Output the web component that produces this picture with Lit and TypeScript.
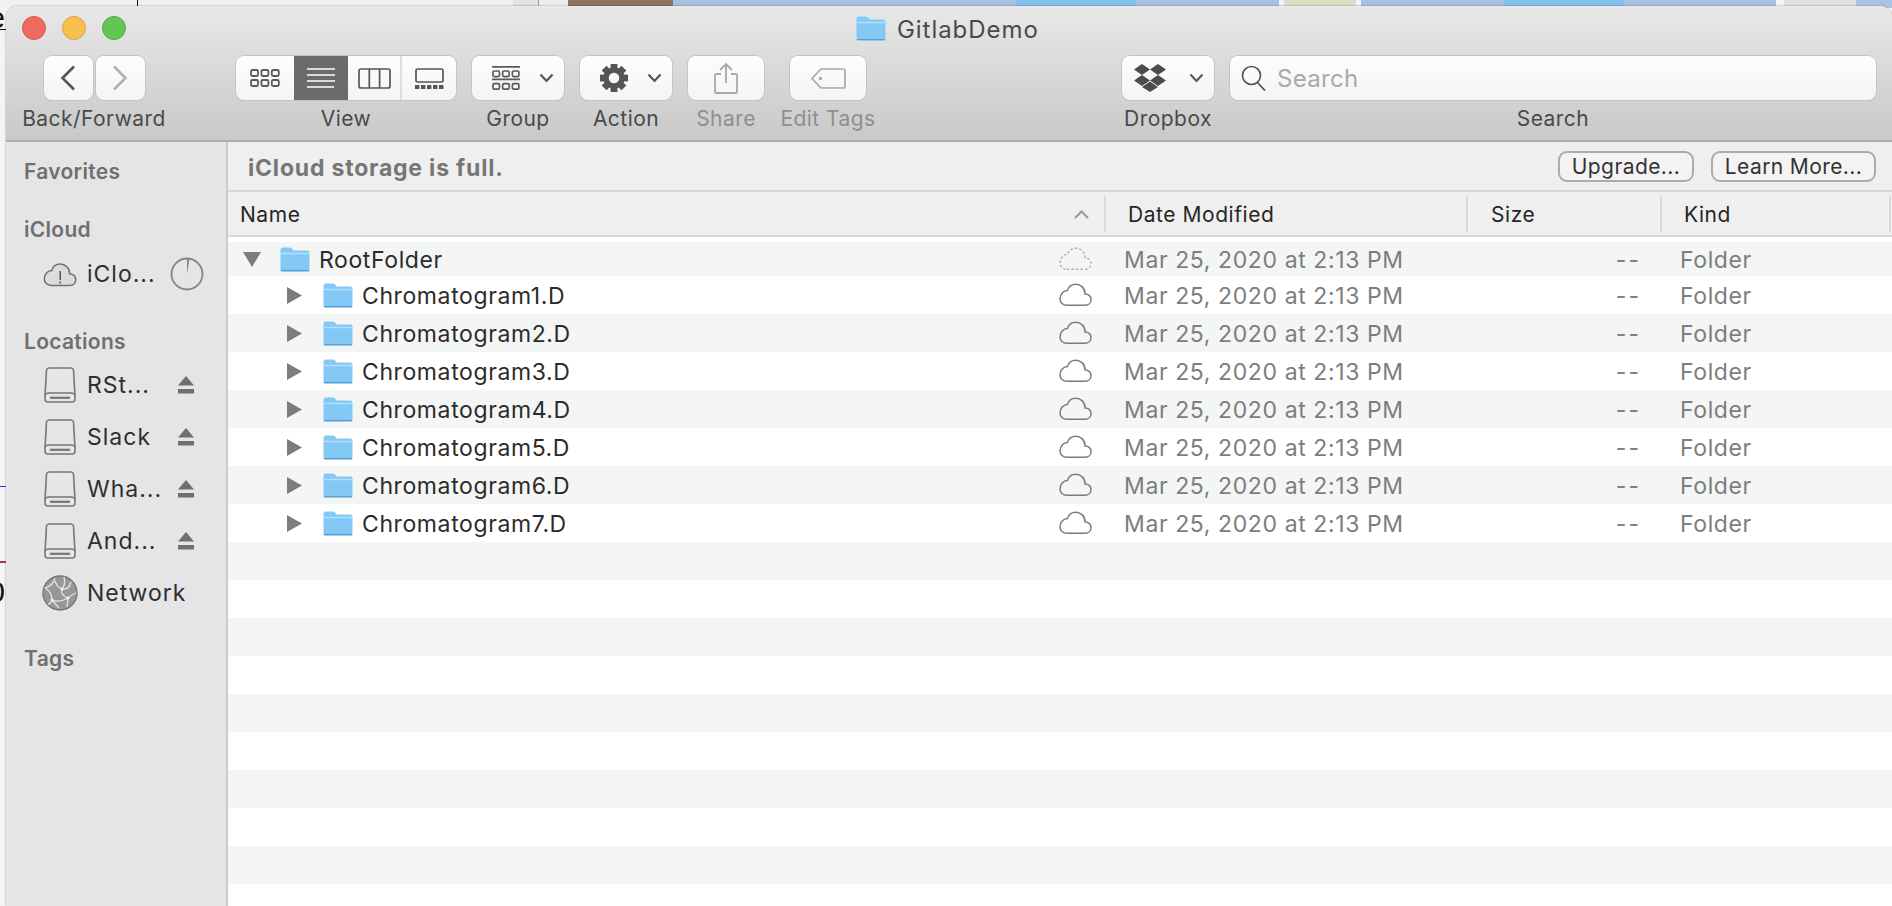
import { LitElement, html, css, svg } from "lit";
import { customElement } from "lit/decorators.js";

const folder = (w = 30, h = 25) => html`<svg width=${w} height=${h} viewBox="0 0 30 25">
  <path d="M.5 3 Q.5 .5 3 .5 H10 Q11.5 .5 12.5 2 L13.5 3.5 H27 Q29.5 3.5 29.5 6 V22.5 Q29.5 24.5 27.5 24.5 H2.5 Q.5 24.5 .5 22.5 Z" fill="#84c9f6"/>
  <path d="M.5 6.5 H29.5" stroke="#b4e0fb" stroke-width="1.4" fill="none"/>
  <path d="M.8 23.6 H29.2" stroke="#5c9fcf" stroke-width="1.4" fill="none"/>
</svg>`;

const cloudPath = "M8 24.5 H26 C30.5 24.5 32.5 21.5 32.5 18.5 C32.5 15 29.5 12.8 26.5 13 C26.5 7 22 3 17 3 C12.5 3 9.5 6 8.5 9.5 C4.5 9.5 1 13.5 1 18 C1 21.5 4 24.5 8 24.5 Z";

const cloud = (dashed: boolean) => html`<svg class="cloud" width="33" height="26" viewBox="0 0 33.5 26">
  <path d=${cloudPath} fill="none" stroke=${dashed ? "#b5b5b5" : "#7b7b7b"} stroke-width="1.5" stroke-dasharray=${dashed ? "2.6 2" : "none"}/>
</svg>`;

const disk = html`<svg width="32" height="36" viewBox="0 0 32 36">
  <path d="M5 1 H27 Q29 1 29.5 3 L31 29 V32 Q31 35 28 35 H4 Q1 35 1 32 V29 L2.5 3 Q3 1 5 1 Z" fill="#e6e6e6" stroke="#777" stroke-width="1.6"/>
  <path d="M1.4 28 Q2 26 4 26 H28 Q30 26 30.6 28" fill="none" stroke="#777" stroke-width="1.4"/>
  <path d="M6 30.8 H26" stroke="#777" stroke-width="2.2"/>
</svg>`;

const eject = html`<svg class="eject" width="16" height="18" viewBox="0 0 16 18">
  <path d="M8 0 L16 9.5 H0 Z" fill="#6f6f6f"/><rect y="13" width="16" height="4.5" fill="#6f6f6f"/>
</svg>`;

const grid3 = (y: number) => svg`${[0, 1, 2].map((i) => svg`<rect x=${1 + i * 10.4} y=${y} width="7" height="6" rx="1.4" fill="none" stroke="#5a5a5a" stroke-width="1.8"/>`)}`;

interface Row { name: string; root?: boolean; }
const rows: Row[] = [
  { name: "RootFolder", root: true },
  ...[1, 2, 3, 4, 5, 6, 7].map((n) => ({ name: `Chromatogram${n}.D` })),
];

@customElement("app-root")
export class AppRoot extends LitElement {
  static styles = css`
    :host { display: block; width: 1892px; height: 906px; overflow: hidden; position: relative; background: #f4f4f4;
      font-family: Inter, "Noto Sans", "Liberation Sans", sans-serif; }
    .backdrop { position: absolute; inset: 0 0 auto 0; height: 8px; display: flex; }
    .backdrop div { height: 100%; flex: none; box-sizing: border-box; }
    .bg-w { width: 513px; background: #f2f2f2; }
    .bg-g { width: 26px; background: #e2e2e2; border-right: 1px solid #999; }
    .bg-l { width: 29px; background: #ededed; }
    .bg-wood { width: 105px; background: #8c7766; }
    .bg-b1 { width: 343px; background: #a9bfdf; }
    .bg-b2 { width: 120px; background: #82c2ea; }
    .bg-b3 { width: 143px; background: #a9bfdf; }
    .bg-gr { width: 72px; background: #d5e0c4; margin-inline: 5px; }
    .bg-b4 { width: 143px; background: #a9bfdf; }
    .bg-b5 { width: 120px; background: #82c2ea; }
    .bg-b6 { width: 152px; background: #a9bfdf; }
    .bg-doc { width: 80px; background: #e0e0e0; border-left: 8px solid #f4f6fb; }
    .backdrop .bg-end { flex: 1; background: #a9c4e6; }
    .mark { position: absolute; left: 0; width: 6px; background: #111; }
    .vline { left: 137px; top: 0; width: 1px; height: 7px; }
    .m1 { top: 29px; height: 1px; }
    .m3 { top: 486px; height: 1px; background: #2233dd; }
    .m4 { top: 561px; height: 2px; background: #b33; }
    .clip { position: absolute; left: 0; width: 5px; overflow: hidden; display: flex; justify-content: flex-end; color: #111;
      font: 30px/30px "Liberation Sans", sans-serif; height: 30px; }
    .c1 { top: 3px; }
    .c2 { top: 577px; }

    .win { position: absolute; left: 6px; top: 6px; right: 0; bottom: 0; border-radius: 12px 12px 0 0; overflow: hidden;
      display: flex; flex-direction: column; background: #fff; box-shadow: 0 0 2px rgba(0,0,0,.45); }

    .toolbar { height: 136px; flex: none; box-sizing: border-box; border-bottom: 2px solid #ababab;
      background: linear-gradient(#e8e8e8, #c9c9c9); padding: 0 16px 0 0; }
    .titlebar { height: 50px; display: flex; align-items: center; position: relative; }
    .lights { display: flex; gap: 16px; margin-left: 16px; margin-top: -6px; }
    .light { width: 22px; height: 22px; border-radius: 50%; border: 1px solid; }
    .red { background: #ee6a5f; border-color: #d8574d; }
    .yellow { background: #f6c04f; border-color: #dea23b; }
    .green { background: #62c554; border-color: #4fad45; }
    .title { position: absolute; left: 850px; top: -1px; height: 48px; display: flex; align-items: center; gap: 11px;
      font-size: 24px; letter-spacing: .95px; color: #4a4a4a; }
    .title svg { position: relative; top: -1px; }

    .tools { display: flex; align-items: flex-start; }
    .tool { display: flex; flex-direction: column; align-items: center; flex: none; }
    .label { font-size: 21px; letter-spacing: .45px; line-height: 24px; margin-top: 7px; color: #4a4a4a; white-space: nowrap; }
    .off .label { color: #8f8f8f; }
    .btn { height: 44px; box-sizing: border-box; background: linear-gradient(#fdfdfd, #f4f4f4); border-radius: 8px;
      box-shadow: 0 0 0 1px #c4c4c4, 0 1px 1px rgba(0,0,0,.1); display: flex; align-items: center; justify-content: center; }
    .nav { display: flex; gap: 3px; }
    .nav .btn { width: 49px; }
    .t-nav { margin-left: 15px; width: 146px; }
    .t-view { margin-left: 69px; width: 220px; }
    .seg { display: flex; width: 100%; padding: 0; overflow: hidden; }
    .seg > div { height: 100%; display: flex; align-items: center; justify-content: center; flex: none; }
    .s1 { width: 58px; } .s2 { width: 54px; background: #6b6b6b; } .s3 { width: 52px; } .s4 { width: 56px; border-left: 2px solid #dedede; box-sizing: border-box; }
    .t-group { margin-left: 16px; width: 92px; }
    .t-action { margin-left: 16px; width: 92px; }
    .t-share { margin-left: 16px; width: 76px; }
    .t-tags { margin-left: 26px; width: 76px; }
    .t-drop { margin-left: 256px; width: 92px; }
    .t-search { margin-left: 16px; flex: 1; }
    .wide { width: 100%; }
    .split { justify-content: flex-start; padding-left: 20px; gap: 0; }
    .split.tight { padding-left: 12px; }
    .split .chev { margin-left: auto; margin-right: 10px; }
    .search { justify-content: flex-start; padding-left: 11px; gap: 11px; font-size: 24px; letter-spacing: .3px; color: #a9a9a9; }

    .body { flex: 1; display: flex; min-height: 0; }
    .side { width: 222px; flex: none; box-sizing: border-box; background: #e5e5e5; border-right: 2px solid #cbcbcb; padding: 18px 0 0 18px; }
    .sec { font-size: 21px; letter-spacing: .3px; font-weight: 600; color: #6f6f6f; line-height: 24px; }
    .sec.s-cloud { margin-top: 34px; }
    .sec.s-loc { margin-top: 30px; }
    .sec.s-tags { margin-top: 28px; }
    .items { margin-top: 6px; }
    .s-loc + .items { margin-top: 5px; }
    .item { height: 52px; display: flex; align-items: center; font-size: 23px; letter-spacing: 1px; color: #2f2f2f; }
    .ic { width: 48px; margin-left: 18px; padding-left: 2px; flex: none; display: flex; justify-content: flex-start; box-sizing: border-box; }
    .ic.round { padding-left: 0; }
    .item-name { width: 80px; flex: none; white-space: nowrap; margin-left: -3px; }
    .item-wide .item-name { width: auto; }
    .eject { margin-left: 11px; }
    .pie { margin-left: 3px; }

    .main { flex: 1; display: flex; flex-direction: column; min-width: 0; background: #fff; }
    .banner { height: 50px; flex: none; box-sizing: border-box; background: #efefef; border-bottom: 2px solid #d6d6d6;
      display: flex; align-items: center; padding: 0 16px 0 20px; }
    .banner b { font-size: 23px; letter-spacing: .8px; font-weight: 700; color: #767676; flex: 1; padding-top: 3px; }
    .pill { height: 31px; box-sizing: border-box; border: 2px solid #ababab; border-radius: 9px; background: #f3f3f3; font-size: 21px; letter-spacing: .4px;
      color: #333; display: flex; align-items: center; justify-content: center; }
    .p1 { width: 136px; margin-right: 17px; } .p2 { width: 165px; }

    .colhead { height: 45px; flex: none; box-sizing: border-box; background: #efefef; border-bottom: 2px solid #d9d9d9;
      display: flex; font-size: 21px; letter-spacing: .55px; color: #262626; }
    .ch { display: flex; align-items: center; box-sizing: border-box; height: 36px; margin-top: 4px; border-right: 2px solid #d9d9d9; flex: none; }
    .ch1 { width: 878px; padding: 0 15px 0 12px; justify-content: space-between; }
    .ch2 { width: 362px; padding-left: 22px; }
    .ch3 { width: 194px; padding-left: 23px; }
    .ch4 { width: 229px; padding-left: 22px; }

    .list { flex: 1; padding-top: 5px; overflow: hidden; }
    .row { height: 38px; display: flex; align-items: center; font-size: 23px; letter-spacing: .6px; color: #2b2b2b; }
    .row.first { height: 34px; }
    .row.alt { background: #f4f5f5; }
    .r-name { width: 831px; flex: none; display: flex; align-items: center; }
    .tri { flex: none; margin-left: 59px; }
    .row.first .tri { margin-left: 15px; }
    .tri-gap { width: 21px; flex: none; }
    .row.first .tri-gap { width: 19px; }
    .r-label { margin-left: 9px; white-space: nowrap; padding-top: 2px; }
    .cloud { flex: none; width: 33px; margin-right: 32px; margin-bottom: 2px; }
    .r-date { width: 382px; color: #7d7d7d; flex: none; white-space: nowrap; padding-top: 2px; }
    .r-size { width: 135px; color: #7d7d7d; text-align: right; flex: none; letter-spacing: 2px; padding-top: 2px; }
    .r-kind { margin-left: 39px; color: #7d7d7d; padding-top: 2px; }
  `;

  render() {
    const total = 18;
    const extra = Array.from({ length: total - rows.length });
    return html`
      <div class="backdrop">
        <div class="bg-w"></div><div class="bg-g"></div><div class="bg-l"></div><div class="bg-wood"></div><div class="bg-b1"></div>
        <div class="bg-b2"></div><div class="bg-b3"></div><div class="bg-gr"></div><div class="bg-b4"></div>
        <div class="bg-b5"></div><div class="bg-b6"></div><div class="bg-doc"></div><div class="bg-end"></div>
      </div>
      <div class="mark vline"></div><div class="mark m1"></div><div class="mark m3"></div><div class="mark m4"></div>
      <div class="clip c1">e</div><div class="clip c2">0</div>

      <div class="win">
        <div class="toolbar">
          <div class="titlebar">
            <div class="lights"><div class="light red"></div><div class="light yellow"></div><div class="light green"></div></div>
            <div class="title">${folder()}<span>GitlabDemo</span></div>
          </div>
          <div class="tools">
            <div class="tool t-nav">
              <div class="nav">
                <div class="btn"><svg width="16" height="26" viewBox="0 0 16 26"><path d="M14 1.5 L2.5 13 L14 24.5" fill="none" stroke="#555" stroke-width="2.6"/></svg></div>
                <div class="btn"><svg width="16" height="26" viewBox="0 0 16 26"><path d="M2 1.5 L13.5 13 L2 24.5" fill="none" stroke="#b0b0b0" stroke-width="2.6"/></svg></div>
              </div>
              <div class="label">Back/Forward</div>
            </div>
            <div class="tool t-view">
              <div class="btn seg">
                <div class="s1"><svg width="30" height="20" viewBox="0 0 30 20">${grid3(2)}${grid3(12)}</svg></div>
                <div class="s2"><svg width="30" height="20" viewBox="0 0 30 20"><path d="M1 1 H29 M1 7 H29 M1 13 H29 M1 19 H28" stroke="#fff" stroke-width="1.6"/></svg></div>
                <div class="s3"><svg width="33" height="21" viewBox="0 0 33 21"><rect x="1" y="1" width="31" height="19" rx="2" fill="none" stroke="#555" stroke-width="1.7"/><path d="M11.3 1 V20 M21.6 1 V20" stroke="#555" stroke-width="1.7"/></svg></div>
                <div class="s4"><svg width="29" height="21" viewBox="0 0 29 21"><rect x="1" y="1" width="27" height="13" rx="1.5" fill="none" stroke="#555" stroke-width="1.7"/>${[0, 1, 2, 3, 4].map((i) => svg`<rect x=${i * 6} y="17" width="4.4" height="4" fill="#555"/>`)}</svg></div>
              </div>
              <div class="label">View</div>
            </div>
            <div class="tool t-group">
              <div class="btn wide split">
                <svg width="28" height="26" viewBox="0 0 30 26"><path d="M0 1 H30 M0 14.5 H30" stroke="#5a5a5a" stroke-width="1.8" fill="none"/>${grid3(5.5)}${grid3(19)}</svg>
                <svg class="chev" width="15" height="10" viewBox="0 0 15 10"><path d="M1.5 1.5 L7.5 8 L13.5 1.5" fill="none" stroke="#555" stroke-width="2.2"/></svg>
              </div>
              <div class="label">Group</div>
            </div>
            <div class="tool t-action">
              <div class="btn wide split">
                <svg width="28" height="28" viewBox="0 0 28 28">
                  ${[0, 45, 90, 135, 180, 225, 270, 315].map((a) => svg`<rect x="10.6" y="0" width="6.8" height="7" fill="#555" transform="rotate(${a} 14 14)"/>`)}
                  <circle cx="14" cy="14" r="8" fill="none" stroke="#555" stroke-width="5.4"/>
                </svg>
                <svg class="chev" width="15" height="10" viewBox="0 0 15 10"><path d="M1.5 1.5 L7.5 8 L13.5 1.5" fill="none" stroke="#555" stroke-width="2.2"/></svg>
              </div>
              <div class="label">Action</div>
            </div>
            <div class="tool t-share off">
              <div class="btn wide">
                <svg width="24" height="31" viewBox="0 0 24 31"><path d="M7 11 H2 Q1 11 1 12 V29 Q1 30 2 30 H22 Q23 30 23 29 V12 Q23 11 22 11 H17 M12 20 V1.5 M6 7 L12 1 L18 7" fill="none" stroke="#a9a9a9" stroke-width="1.8"/></svg>
              </div>
              <div class="label">Share</div>
            </div>
            <div class="tool t-tags off">
              <div class="btn wide">
                <svg width="35" height="21" viewBox="0 0 35 21"><path d="M10 1 H32 Q34 1 34 3 V18 Q34 20 32 20 H10 L1 10.5 Z" fill="none" stroke="#a9a9a9" stroke-width="1.7"/><circle cx="9.5" cy="10.5" r="1.8" fill="#a9a9a9"/></svg>
              </div>
              <div class="label">Edit Tags</div>
            </div>
            <div class="tool t-drop">
              <div class="btn wide split tight">
                <svg width="32" height="28" viewBox="0 0 32 28" fill="#4c4c4c">
                  <path d="M8 0 L16 5.5 L8 11 L0 5.5 Z M24 0 L32 5.5 L24 11 L16 5.5 Z M8 11 L16 16.5 L8 22 L0 16.5 Z M24 11 L32 16.5 L24 22 L16 16.5 Z M16 17.5 L24 23 L16 28 L8 23 Z"/>
                </svg>
                <svg class="chev" width="15" height="10" viewBox="0 0 15 10"><path d="M1.5 1.5 L7.5 8 L13.5 1.5" fill="none" stroke="#555" stroke-width="2"/></svg>
              </div>
              <div class="label">Dropbox</div>
            </div>
            <div class="tool t-search">
              <div class="btn wide search">
                <svg width="25" height="26" viewBox="0 0 25 26"><circle cx="10.5" cy="10.5" r="9" fill="none" stroke="#555" stroke-width="1.7"/><path d="M16 17 L24 25.5" stroke="#555" stroke-width="1.8"/></svg>
                <span>Search</span>
              </div>
              <div class="label">Search</div>
            </div>
          </div>
        </div>

        <div class="body">
          <div class="side">
            <div class="sec">Favorites</div>
            <div class="sec s-cloud">iCloud</div>
            <div class="items">
              <div class="item">
                <div class="ic round">
                  <svg width="36" height="26" viewBox="0 0 33.5 26"><path d=${cloudPath} fill="#dcdcdc" stroke="#6f6f6f" stroke-width="1.5"/><path d="M17 10 V19 M17 20.5 V22.5" stroke="#555" stroke-width="1.5"/></svg>
                </div>
                <span class="item-name">iClo...</span>
                <svg class="pie" width="34" height="34" viewBox="0 0 34 34"><circle cx="17" cy="17" r="15.5" fill="none" stroke="#858585" stroke-width="1.8"/><path d="M17 17 V1.5 L19.5 2 Z" fill="#858585"/></svg>
              </div>
            </div>
            <div class="sec s-loc">Locations</div>
            <div class="items">
              ${["RSt...", "Slack", "Wha...", "And..."].map((n) => html`
                <div class="item"><div class="ic">${disk}</div><span class="item-name">${n}</span>${eject}</div>`)}
              <div class="item item-wide">
                <div class="ic round">
                  <svg width="36" height="36" viewBox="0 0 36 36">
                    <circle cx="18" cy="18" r="17" fill="#979797" stroke="#777" stroke-width="1.4"/>
                    <g fill="none" stroke="#e4e4e4" stroke-width="1.3">
                      <path d="M3 13 Q11 11 13 3 M3 13 Q10 17 10 25 Q9 29 6 29 M10 25 Q17 28 26 23 M13 6 Q15 12 20 14 Q27 15 29 7 M20 14 Q18 20 26 23 M26 23 Q31 19 34 18 M20 14 Q24 9 22 2 M10 25 L17 33 M26 23 L25 32"/>
                    </g>
                    <g fill="#efefef"><circle cx="10" cy="25" r="1.6"/><circle cx="26" cy="23" r="1.6"/><circle cx="20" cy="14" r="1.6"/></g>
                  </svg>
                </div>
                <span class="item-name">Network</span>
              </div>
            </div>
            <div class="sec s-tags">Tags</div>
          </div>

          <div class="main">
            <div class="banner">
              <b>iCloud storage is full.</b>
              <div class="pill p1">Upgrade...</div>
              <div class="pill p2">Learn More...</div>
            </div>
            <div class="colhead">
              <div class="ch ch1"><span>Name</span><svg width="15" height="9" viewBox="0 0 15 9"><path d="M1 8 L7.5 1.5 L14 8" fill="none" stroke="#9a9a9a" stroke-width="2"/></svg></div>
              <div class="ch ch2">Date Modified</div>
              <div class="ch ch3">Size</div>
              <div class="ch ch4">Kind</div>
            </div>
            <div class="list">
              ${rows.map((r, i) => html`
                <div class="row ${i % 2 === 0 ? "alt" : ""} ${r.root ? "first" : ""}">
                  <div class="r-name">
                    ${r.root
                      ? html`<svg class="tri" width="18" height="15" viewBox="0 0 18 15"><path d="M0 0 H18 L9 15 Z" fill="#7d7d7d"/></svg>`
                      : html`<svg class="tri" width="15" height="17" viewBox="0 0 15 17"><path d="M0 0 L15 8.5 L0 17 Z" fill="#7d7d7d"/></svg>`}
                    <div class="tri-gap"></div>
                    ${folder()}
                    <span class="r-label">${r.name}</span>
                  </div>
                  ${cloud(!!r.root)}
                  <div class="r-date">Mar 25, 2020 at 2:13 PM</div>
                  <div class="r-size">--</div>
                  <div class="r-kind">Folder</div>
                </div>`)}
              ${extra.map((_, i) => html`<div class="row ${(i + rows.length) % 2 === 0 ? "alt" : ""}"></div>`)}
            </div>
          </div>
        </div>
      </div>
    `;
  }
}
